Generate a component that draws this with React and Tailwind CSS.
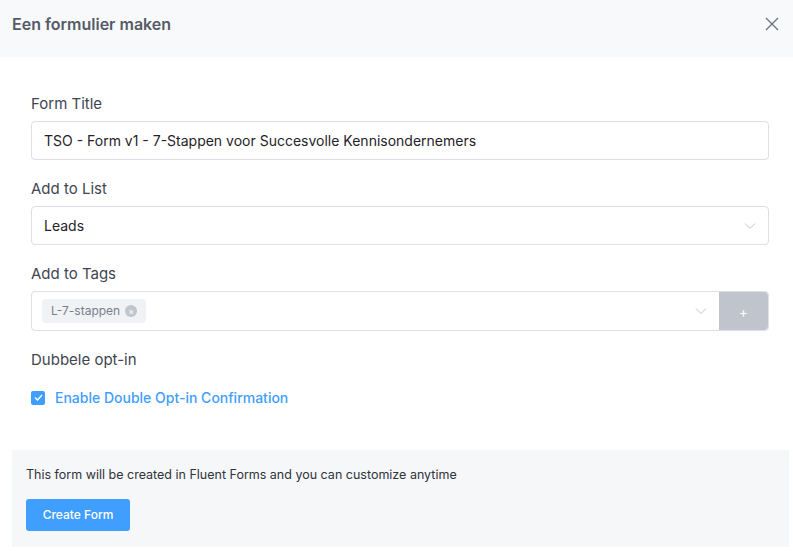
export default function App() {
  return (
    <div className="w-[793px] h-[555px] bg-white text-[#3f4550]" style={{fontFamily: 'Inter, "Liberation Sans", sans-serif'}}>
      <div className="h-[57px] bg-[#f8f9fb] flex items-center justify-between pl-[12px] pr-[14px] pb-[10px]">
        <span className="text-[16px] font-semibold text-[#555b66]">Een formulier maken</span>
        <svg width="14" height="14" viewBox="0 0 14 14" stroke="#6b7280" strokeWidth="1.3"><path d="M1 1L13 13M13 1L1 13"/></svg>
      </div>
      <div className="pl-[31px] pr-[24px] pt-[36px]">
        <div className="text-[15px] leading-[22px] mb-[6px]">Form Title</div>
        <div className="h-[39px] border border-[#dcdfe6] rounded flex items-center px-[12px] text-[14px] text-[#1f2329]">TSO - Form v1 - 7-Stappen voor Succesvolle Kennisondernemers</div>
        <div className="text-[15px] leading-[22px] mt-[18px] mb-[6px]">Add to List</div>
        <div className="h-[39px] border border-[#dcdfe6] rounded flex items-center justify-between px-[12px] text-[14px] text-[#1f2329]">
          <span>Leads</span>
          <svg width="12" height="8" viewBox="0 0 12 8" fill="none" stroke="#c0c4cc" strokeWidth="1"><path d="M1 1.5L6 6.5L11 1.5"/></svg>
        </div>
        <div className="text-[15px] leading-[22px] mt-[18px] mb-[6px]">Add to Tags</div>
        <div className="h-[40px] border border-[#dcdfe6] rounded flex">
          <div className="flex-1 flex items-center justify-between pl-[10px] pr-[12px]">
            <span className="h-[24px] bg-[#f0f2f5] rounded flex items-center px-[9px] gap-[5px] text-[12px] text-[#7a808a]">L-7-stappen
              <span className="w-[12px] h-[12px] rounded-full bg-[#c0c4cc] text-white flex items-center justify-center text-[9px] leading-none">×</span>
            </span>
            <svg width="12" height="8" viewBox="0 0 12 8" fill="none" stroke="#c0c4cc" strokeWidth="1"><path d="M1 1.5L6 6.5L11 1.5"/></svg>
          </div>
          <div className="w-[49px] bg-[#c0c4cc] rounded-r flex items-center justify-center text-white text-[14px]">+</div>
        </div>
        <div className="text-[15px] leading-[22px] mt-[18px]">Dubbele opt-in</div>
        <div className="flex items-center gap-[10px] mt-[16px]">
          <span className="w-[14px] h-[14px] bg-[#409eff] rounded-[2px] flex items-center justify-center">
            <svg width="9" height="7" viewBox="0 0 9 7" fill="none" stroke="white" strokeWidth="1.4"><path d="M1 3.5L3.5 6L8 1"/></svg>
          </span>
          <span className="text-[14px] font-medium text-[#409eff]">Enable Double Opt-in Confirmation</span>
        </div>
      </div>
      <div className="ml-[12px] mr-[4px] mt-[42px] bg-[#f6f7f9] h-[97px] pl-[14px] pt-[16px]">
        <div className="text-[12.5px] text-[#2f343b]">This form will be created in Fluent Forms and you can customize anytime</div>
        <button className="mt-[14px] w-[104px] h-[32px] bg-[#409eff] text-white text-[12px] font-medium rounded-[3px]">Create Form</button>
      </div>
    </div>
  );
}
